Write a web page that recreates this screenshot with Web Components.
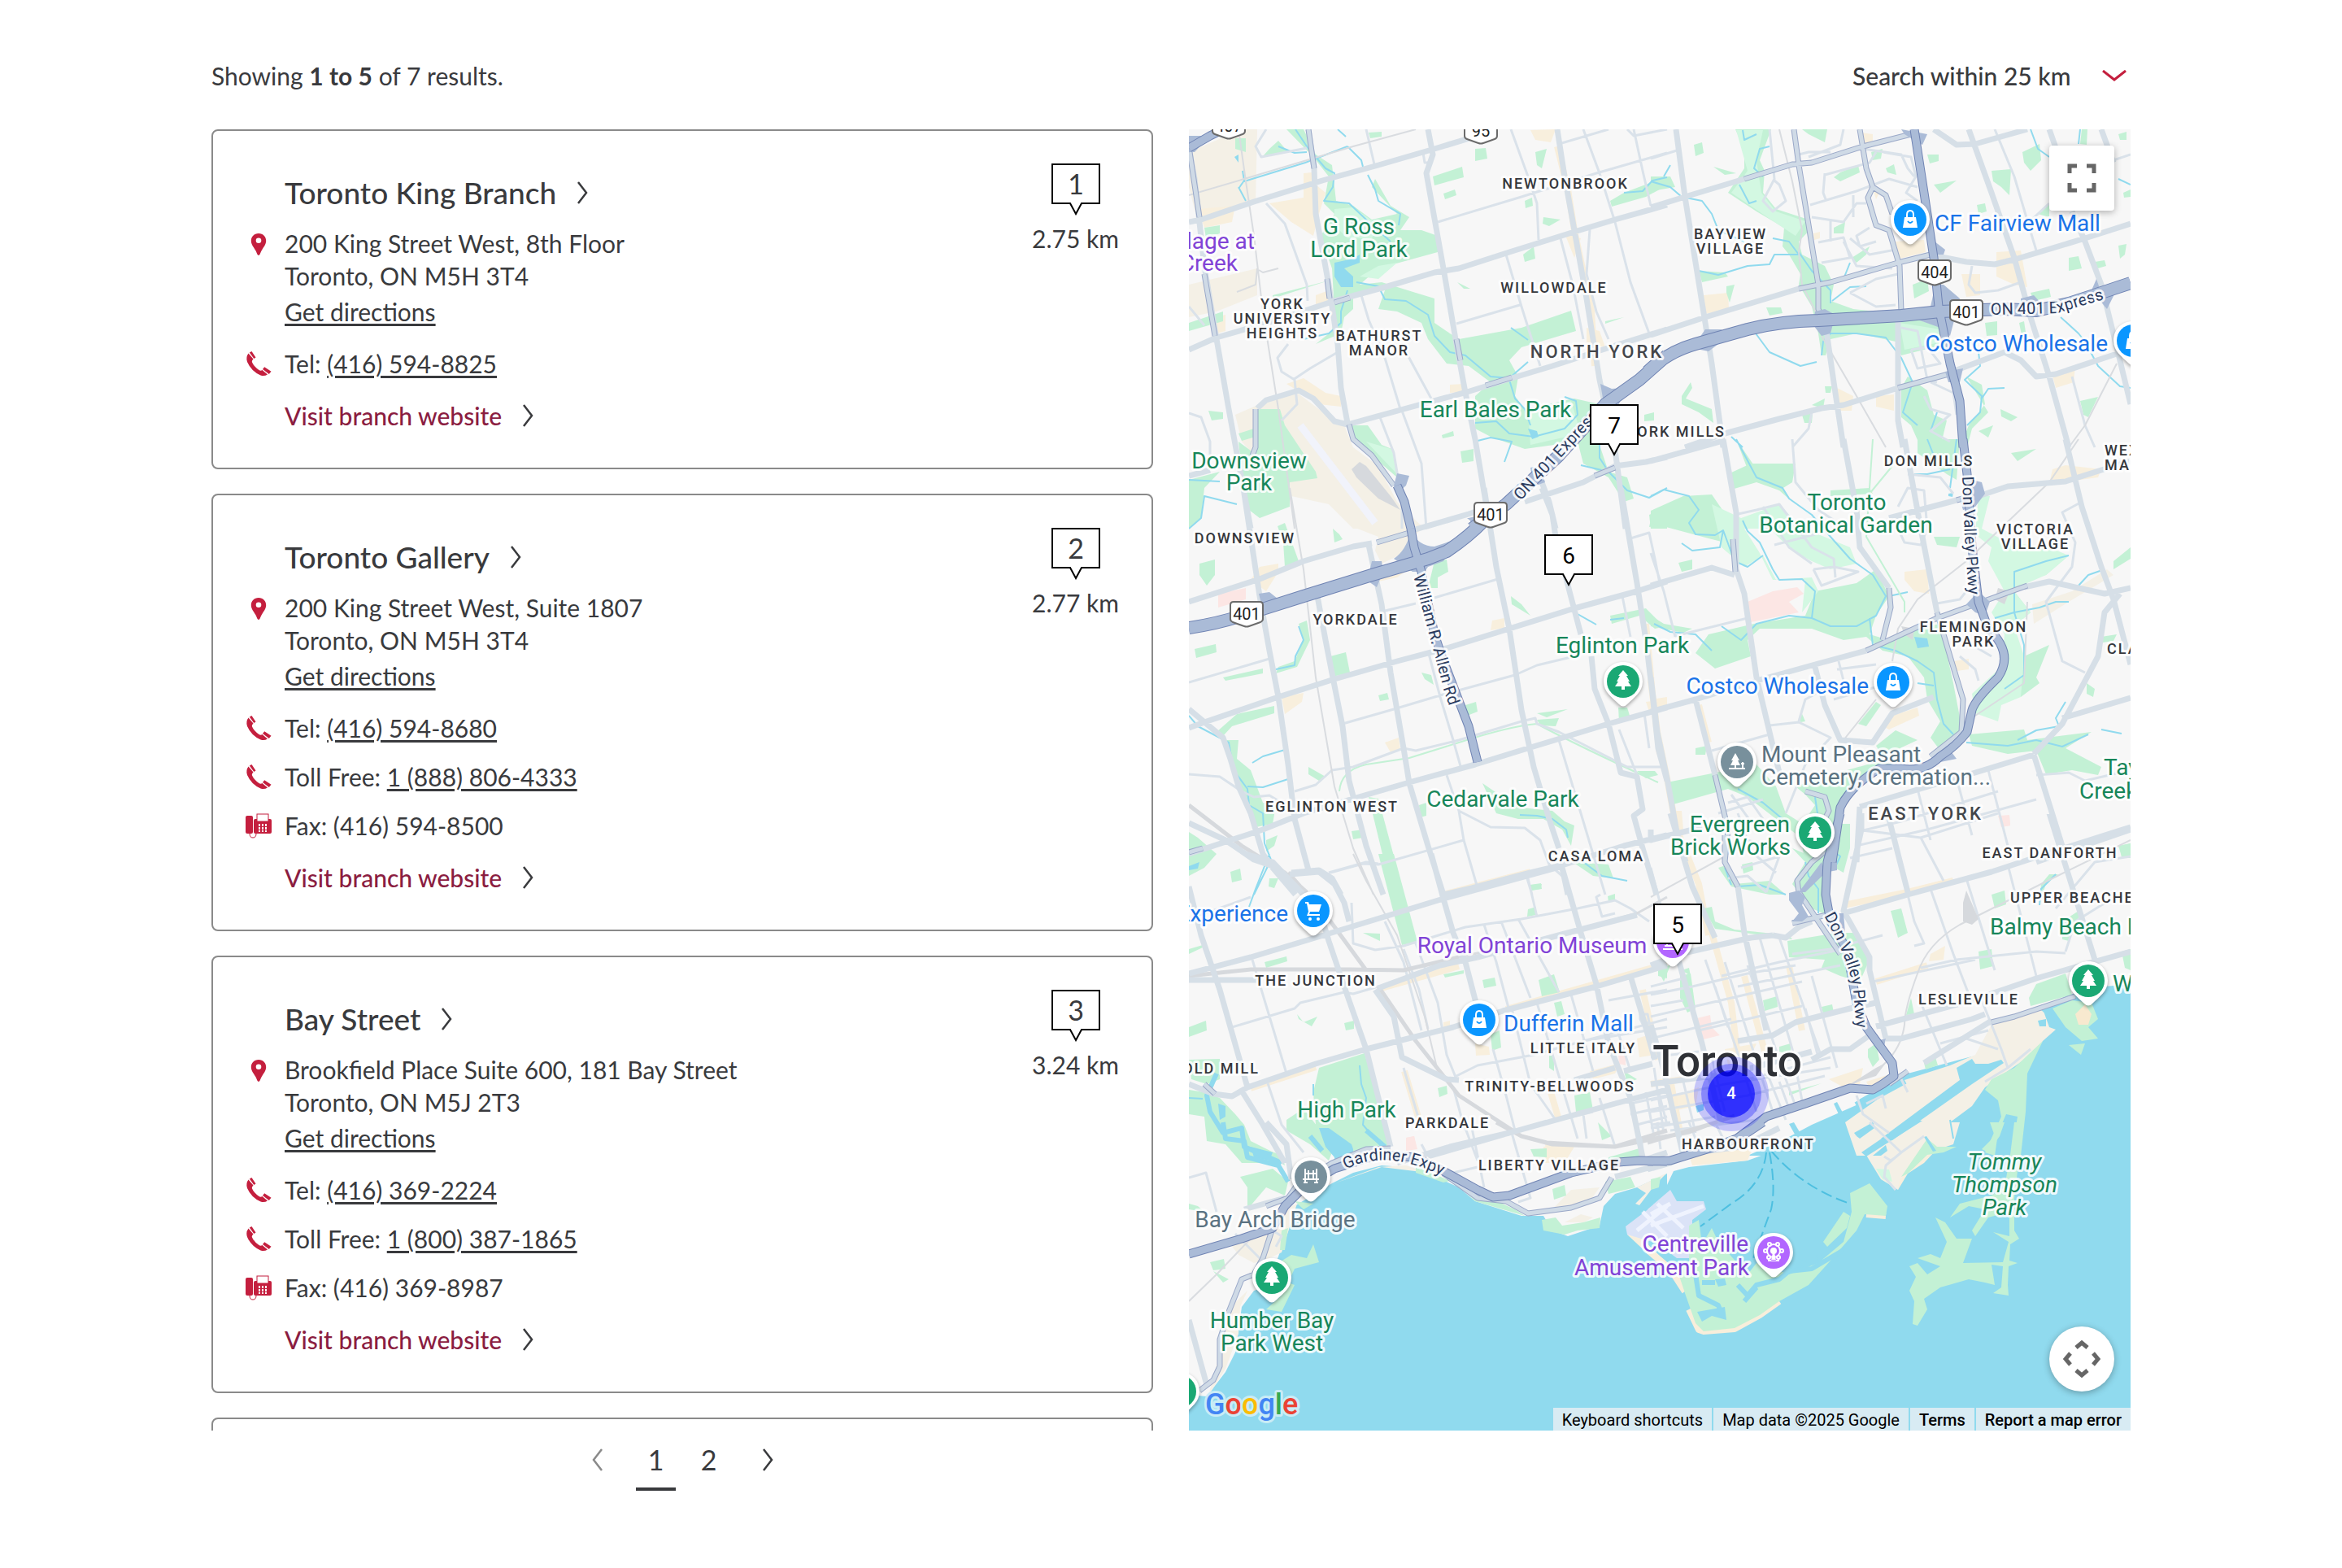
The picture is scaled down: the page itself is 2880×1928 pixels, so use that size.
<!DOCTYPE html>
<html lang="en">
<head>
<meta charset="utf-8">
<meta name="viewport" content="width=device-width, initial-scale=1">
<title>Branch locator</title>
<style>
  body { margin: 0; background: #fff; color: #393a3d; font: 400 30px/40px Lato, "Open Sans", sans-serif; }
</style>
</head>
<body>
<branch-locator>
  <p slot="summary">Showing <b>1 to 5</b> of 7 results.</p>
  <distance-select slot="filter"></distance-select>

  <branch-card slot="results" index="1" distance="2.75 km">
    <span slot="name">Toronto King Branch</span>
    <span slot="address">200 King Street West, 8th Floor<br>Toronto, ON M5H 3T4</span>
    <contact-line kind="phone" label="Tel:" number="(416) 594-8825"></contact-line>
  </branch-card>
  <branch-card slot="results" index="2" distance="2.77 km">
    <span slot="name">Toronto Gallery</span>
    <span slot="address">200 King Street West, Suite 1807<br>Toronto, ON M5H 3T4</span>
    <contact-line kind="phone" label="Tel:" number="(416) 594-8680"></contact-line>
    <contact-line kind="phone" label="Toll Free:" number="1 (888) 806-4333"></contact-line>
    <contact-line kind="fax" label="Fax:" number="(416) 594-8500"></contact-line>
  </branch-card>
  <branch-card slot="results" index="3" distance="3.24 km">
    <span slot="name">Bay Street</span>
    <span slot="address">Brookfield Place Suite 600, 181 Bay Street<br>Toronto, ON M5J 2T3</span>
    <contact-line kind="phone" label="Tel:" number="(416) 369-2224"></contact-line>
    <contact-line kind="phone" label="Toll Free:" number="1 (800) 387-1865"></contact-line>
    <contact-line kind="fax" label="Fax:" number="(416) 369-8987"></contact-line>
  </branch-card>
  <branch-card slot="results" loading></branch-card>

  <branch-map slot="map"></branch-map>
  <page-nav slot="pages"></page-nav>
</branch-locator>

<script>
/* ---------- shared helpers ---------- */
function component(tag, render) {
  customElements.define(tag, class extends HTMLElement {
    constructor() { super(); this.attachShadow({ mode: "open" }); }
    connectedCallback() { this.shadowRoot.innerHTML = render(this); }
  });
}
const chevron = {
  right: '<svg width="14" height="28" viewBox="0 0 14 28" fill="none" stroke="currentColor" stroke-width="2.5" aria-hidden="true"><path d="M1 1 L11 14 L1 27"/></svg>',
  left: '<svg width="14" height="28" viewBox="0 0 14 28" fill="none" stroke="currentColor" stroke-width="2.5" aria-hidden="true"><path d="M13 1 L3 14 L13 27"/></svg>',
  down: '<svg width="30" height="14" viewBox="0 0 30 14" fill="none" stroke="currentColor" stroke-width="3" aria-hidden="true"><path d="M1 1 L15 12 L29 1"/></svg>'
};
const icons = {
  place: '<svg width="32" height="32" viewBox="0 0 32 32" fill="#c41f3e" fill-rule="evenodd" aria-hidden="true"><path d="M16 3C10.500 3 6.800 7 6.800 12C6.800 16.500 10 20 12 23.500C13.500 26 14 28.500 15 29.500Q16 30.300 17 29.500C18 28.500 18.500 26 20 23.500C22 20 25.200 16.500 25.200 12C25.200 7 21.500 3 16 3ZM16 8.500A3.300 3.300 0 1 1 16 15.100A3.300 3.300 0 1 1 16 8.500Z"/></svg>',
  phone: '<svg width="32" height="32" viewBox="0 0 32 32" fill="#c41f3e" aria-hidden="true"><path d="M3.500 3.500Q0 8 2 14Q7 25.500 18.500 30.500Q23 32 27 29.500L20.500 24Q18.500 25.500 16.500 24Q10 19.500 7.800 14Q7.600 12 9.500 10.500Z"/><path d="M4.800 2.400L7.500 1L12.500 8.500L10.300 10Z"/><path d="M21 23L23.200 20.200L31.500 25.800L28.800 29Z"/></svg>',
  fax: '<svg width="32" height="32" viewBox="0 0 32 32" fill="#c41f3e" aria-hidden="true"><rect x="0" y="4" width="9" height="22" rx="2"/><rect x="10" y="8" width="22" height="18" rx="2"/><rect x="14" y="2" width="14" height="9" fill="#fff" stroke="#c41f3e"/><path d="M5 26Q5 31 9 31Q13 31 13 26" fill="none" stroke="#c41f3e"/><g fill="#fff"><path d="M16 14h2v3h-2zM20 14h2v3h-2zM24 14h2v3h-2zM16 18h2v3h-2zM20 18h2v3h-2zM24 18h2v3h-2zM16 22h2v2h-2zM20 22h2v2h-2zM24 22h2v2h-2z"/></g></svg>'
};

/* ---------- page frame ---------- */
component("branch-locator", () => `
  <style>
    :host { display: block; box-sizing: border-box; max-width: 2360px; margin: 0 auto; padding-top: 73px; }
    header { display: flex; justify-content: space-between; margin-bottom: 46px; }
    .columns { display: grid; grid-template-columns: 1fr 1fr; column-gap: 44px; height: calc(100vh - 328px); }
    .results { display: flex; flex-direction: column; gap: 30px; overflow: hidden; }
    .pages { display: grid; grid-template-columns: 1fr 1fr; column-gap: 44px; }
    ::slotted(p) { margin: 0; }
  </style>
  <header><slot name="summary"></slot><slot name="filter"></slot></header>
  <main class="columns">
    <div class="results"><slot name="results"></slot></div>
    <slot name="map"></slot>
  </main>
  <div class="pages"><slot name="pages"></slot></div>`);

component("distance-select", () => `
  <style>
    :host { display: block; }
    label { display: flex; position: relative; }
    select { appearance: none; border: 0; margin: 0; padding: 0 72px 0 0; background: none; color: inherit;
             font: inherit; font-weight: 500; height: 40px; }
    svg { position: absolute; right: 5px; top: 13px; color: #c41f3e; pointer-events: none; }
  </style>
  <label><select aria-label="Search radius"><option>Search within 25 km</option></select>${chevron.down}</label>`);

/* ---------- result cards ---------- */
component("contact-line", el => {
  const n = el.getAttribute("number"), kind = el.getAttribute("kind");
  const value = kind === "fax" ? n : `<a href="tel:${n.replace(/\D/g, "")}">${n}</a>`;
  return `
  <style>
    :host { display: flex; gap: 16px; align-items: center; }
    a { color: inherit; text-decoration-thickness: 3px; text-underline-offset: 3px; }
    svg { display: block; }
  </style>${icons[kind]}<span>${el.getAttribute("label")} ${value}</span>`;
});

component("number-flag", el => `
  <style>
    :host { display: block; width: 60px; height: 64px; }
    svg { display: block; }
    text { font: 400 34px Lato, sans-serif; }
  </style>
  <svg width="60" height="64" viewBox="0 0 60 64"><path d="M1 1H59V49H37L30 62L23 49H1Z" fill="#fff" stroke="#000" stroke-width="2"/><text x="30" y="38" text-anchor="middle" fill="#393a3d">${el.getAttribute("value")}</text></svg>`);

component("branch-card", el => el.hasAttribute("loading") ? `
  <style>:host { display: block; box-sizing: border-box; flex: none; height: 418px; border: 2px solid #8a8a8a; border-radius: 8px; }</style>` : `
  <style>
    :host { display: flex; justify-content: space-between; align-items: flex-start; flex: none; box-sizing: border-box;
            padding: 40px 40px 44px; border: 2px solid #8a8a8a; border-radius: 8px; }
    .body { display: flex; flex-direction: column; padding-top: 12px; }
    h2 { margin: 0 0 18px 48px; font-size: 37px; line-height: 48px; font-weight: 500; }
    h2 a, .visit { display: inline-flex; align-items: center; gap: 26px; color: inherit; text-decoration: none; }
    .place { display: flex; gap: 16px; align-items: flex-start; }
    .place > svg { margin-top: 5px; }
    .place div { display: flex; flex-direction: column; align-items: flex-start; gap: 4px; }
    .place a { color: inherit; text-decoration-thickness: 3px; text-underline-offset: 3px; }
    .lines { display: flex; flex-direction: column; gap: 20px; margin: 24px 0; }
    .visit { margin-left: 48px; font-weight: 500; align-self: flex-start; }
    .visit span { color: #8b1d41; }
    aside { display: flex; flex-direction: column; align-items: center; gap: 8px; }
  </style>
  <div class="body">
    <h2><a href="#branch"><slot name="name"></slot>${chevron.right}</a></h2>
    <div class="place">${icons.place}<div><slot name="address"></slot><a href="#directions">Get directions</a></div></div>
    <div class="lines"><slot></slot></div>
    <a class="visit" href="#website"><span>Visit branch website</span>${chevron.right}</a>
  </div>
  <aside><number-flag value="${el.getAttribute("index")}"></number-flag><span>${el.getAttribute("distance")}</span></aside>`);

component("page-nav", () => `
  <style>
    :host { display: block; padding-top: 14px; }
    nav { display: flex; justify-content: center; gap: 24px; }
    div { display: flex; gap: 16px; }
    a, button { box-sizing: border-box; width: 49px; height: 60px; padding: 0 0 12px; border: 0; border-bottom: 4px solid transparent;
                background: none; color: inherit; font: inherit; font-size: 34px; line-height: 44px; text-align: center; text-decoration: none; }
    button { display: flex; align-items: center; justify-content: center; }
    button:disabled { color: #8a8a8a; }
    a[aria-current] { border-color: #393a3d; }
  </style>
  <nav aria-label="Result pages">
    <button type="button" aria-label="Previous page" disabled>${chevron.left}</button>
    <div><a href="#page-1" aria-current="page">1</a><a href="#page-2">2</a></div>
    <button type="button" aria-label="Next page">${chevron.right}</button>
  </nav>`);

/* ---------- map data ----------
   Each sheet is digitised on its own grid: at = origin on the map plane, k = grid step. */
const W = 600 / 1568, E = 620 / 1568, V = 1 / 3;
const sheets = [
{ at: [1450, 150], k: W,
  tan: "M31 110L200 27L250 27L245 300L60 370L31 240Z M31 600L250 540L250 640L120 700L31 720Z M180 1080L260 1040L380 1000L450 1060L530 1120L560 1200L640 1270L700 1400L760 1470L790 1500L560 1500L480 1410L360 1380L200 1180Z",
  shop: "M60 320L180 310L170 370L80 390Z M290 300L400 280L400 190L425 185L440 230L470 260L450 340L430 420L360 370Z M345 965L400 945L470 1000L520 1010L520 1050L450 1040L380 990Z M440 640L480 620L490 665L440 680Z M870 970L915 965L915 995L870 1000Z M1130 30L1210 27L1195 75L1145 65Z M120 720L150 710L150 770L120 780Z M1240 410L1290 430L1270 500Z M1310 760L1350 770L1370 830L1310 820Z",
  strip: "M1215 90L1250 250L1270 400L1295 540L1325 700L1335 900",
  park: "M345 27L400 27L440 120L490 160L505 290L560 310L620 360L700 340L620 240L630 210L680 310L740 350L710 400L780 400L830 420L830 480L640 540L580 600L650 590L760 630L820 650L820 740L870 780L900 800L1100 760L1260 695L1275 770L1100 830L1060 880L1090 940L1080 1010L1110 1060L1270 1020L1350 1040L1350 1190L1380 1290L1440 1310L1460 1390L1430 1400L1380 1310L1300 1260L1280 1180L1110 1205L1000 1160L950 1130L950 1010L1000 960L930 900L860 890L800 800L780 740L700 700L640 690L660 620L560 640L560 690L530 720L520 780L440 820L490 770L500 700L490 540L455 420L500 340L465 300L480 200L430 130Z M815 200L910 165L915 205L820 235Z M850 265L885 250L890 270L855 285Z M950 100L985 95L990 135L950 145Z M1145 110L1180 100L1165 170L1150 160Z M1110 290L1135 280L1138 310L1112 318Z M1170 350L1225 360L1190 385L1168 375Z M1105 490L1140 460L1145 505L1110 515Z M1430 260L1568 200L1568 235L1500 275L1390 312L1385 290Z M895 590L935 615L915 615Z M250 1060L325 1060L340 1120L440 1290L445 1315L355 1330L355 1420L260 1460L225 1430L200 1290L190 1180L240 1220Z M540 1120L605 1120L650 1190L690 1210L700 1310L620 1230L570 1190Z M31 1320L130 1290L80 1350L70 1460L31 1500Z M95 1065L140 1070L140 1095L105 1100Z M190 1150L240 1130L245 1160L200 1175Z M845 1155L880 1140L882 1158L848 1168Z M905 1215L945 1205L945 1250L910 1258Z M1495 1080L1525 1070L1525 1100L1495 1105Z M1510 1450L1568 1420L1568 1500L1515 1500Z M80 390L130 380L130 410L85 430Z M31 740L140 700L140 735L31 770Z M180 60L215 60L215 110L180 100Z M290 100L320 70L350 110L270 125Z M610 40L650 35L650 55L615 60Z M1370 735L1430 720L1370 745Z M300 640L480 585L300 650Z",
  light: "M500 320L560 315L640 380L620 430L540 430L500 380Z M580 570L640 530L700 520L640 580Z M1120 1070L1260 1030L1290 1150L1130 1190Z M600 1180L690 1210L700 1300Z",
  water: "M500 520L560 505L580 490L580 520L530 540L560 570L560 610L520 610L500 570Z M178 130L190 120L190 150Z M1120 1130L1150 1140L1155 1160L1135 1170Z",
  stream: "M375 27L410 90L440 130L470 170L500 190L495 240L465 290L545 300L600 360L680 440 M605 195L630 250L640 290L710 340L705 380 M540 90L585 140L590 165 M510 27L535 55 M320 90L370 115L410 110 M570 590L640 605L660 655L730 660L800 710L820 790L870 850L920 860L1000 940L1060 945L1120 885 M540 620L520 700L520 740L480 780L400 800 M1060 950L1080 1020L1110 1060L1130 1120 M950 1110L1020 1105L1060 1150L1140 1160L1240 1130L1280 1080L1275 1030L1240 1015 M960 1175L1000 1165L1070 1180L1045 1255 M1350 1190L1350 1240L1380 1290L1290 1265 M1380 1290L1440 1360L1510 1385L1568 1350 M1430 260L1490 255L1520 215L1568 205 M210 220L405 150L540 90 M190 245L210 215L205 180 M190 240L215 290 M31 1320L130 1325 M31 1500L70 1460L80 1380L185 1410 M1065 760L1120 805",
  minor: "M600 27L628 155 M1065 27L1120 200L1150 300L1155 435 M1300 27L1350 190L1400 370L1450 590L1510 780 M1460 27L1490 180L1515 310 M1050 490L1100 680L1160 900 M1225 430L1265 600L1300 800 M1320 395L1310 560L1340 700L1380 800 M830 370L1100 275L1340 190L1568 115 M1220 80L1380 27 M890 745L1095 675 M585 640L610 730L660 870L710 1060 M730 850L810 1020 M645 1090L690 1220L715 1400L715 1500 M715 1065L780 1260L795 1500 M280 300L340 375L410 600L412 660 M365 950L420 910L510 850 M350 820L315 870L330 920L370 950L380 1040L330 1100 M31 1075L70 1090L100 1180L100 1270 M785 115L790 150L805 150 M280 27L245 90L265 130L410 95 M1440 27L1460 50L1568 27 M31 680L80 750",
  rail: "M190 27L215 220L240 420L270 700L320 1060L370 1500 M31 270L210 210L560 90L760 27 M255 545L270 555L320 540 M250 540L245 600L185 628",
  major: "M31 370L70 360L240 295L460 215L640 160L820 100L960 50L1010 27 M31 840L120 795L300 735L500 660L660 610L820 555L900 540L1060 480L1270 405L1400 360L1568 305 M250 1055L280 1025L385 990L430 1020L500 1105L540 1115L720 1060L925 995L1070 945L1200 900L1400 825L1568 765 M31 1305L100 1285 M790 1495L930 1445L1000 1420 M1110 1400L1300 1330L1400 1270L1500 1255L1568 1235 M31 95L50 210L80 530L120 800L160 1060L200 1320L230 1500 M415 27L435 170L440 340L480 600L510 820L520 980L540 1110 M800 27L815 120L795 190L850 540L890 820L920 1000L950 1170L985 1400 M1215 27L1240 200L1270 400L1310 650L1350 950L1400 1210L1435 1500 M1165 1330L1190 1400L1210 1500",
  cased: "M245 1060L245 1200L235 1230 M500 665L550 648 M985 973L1070 943 M80 560L115 790 M475 580L483 650 M890 800L905 880 M1335 1305L1400 1275 M415 27L435 170 M35 110L65 350 M545 1115L560 1170L620 1230L690 1340",
  runway: "M390 1120L630 1480",
  apron: "M555 1280L580 1255L600 1270L680 1380L710 1430L640 1390L570 1310Z",
  ramp: "M1355 965L1390 985L1430 980L1415 1040L1365 1035Z M690 1340L700 1295L740 1305L730 1340L700 1370Z M1130 1275L1160 1270L1175 1330L1140 1345Z M930 1460L950 1455L950 1500Z M31 50L100 50L50 110L31 110Z",
  hwy: "M1568 860L1480 950L1370 1040L1220 1230L1050 1410L940 1500",
  hwy2: "M31 95L100 50L140 27 M700 1340L725 1400L745 1500" },
{ at: [2030, 50], k: E,
  park: "M262 327L375 327L340 440L355 480L350 560L390 620L490 660L500 690L460 740L470 790L540 830L570 900L560 960L630 990L700 1000L770 1020L830 1030L910 1060L920 1120L780 1160L760 1110L680 1090L640 1080L560 1100L545 1160L530 1160L520 1080L500 980L460 900L465 860L430 790L410 760L415 690L330 630L240 560L290 470L290 400Z M150 850L230 855L240 870L160 890Z M780 1280L800 1240L860 1290L880 1380L920 1400L900 1500L840 1500L810 1420L780 1390Z M980 1240L1030 1270L1040 1340L990 1420L960 1500L985 1500L1000 1430L1050 1370Z M133 385L160 375L165 415L140 425Z M570 505L590 485L645 460L650 485L590 520Z M685 410L720 400L715 435L690 440Z M730 470L755 455L765 495L735 485Z M470 327L550 327L540 375L490 345Z M360 985L405 985L410 1005L370 1015Z M235 905L260 900L245 965L235 930Z M860 420L895 420L895 445L868 452Z M1060 480L1120 475L1115 570L1090 540L1065 520Z M1155 410L1210 380L1215 440L1180 480L1160 450Z M880 530L950 515L900 560Z M1015 605L1040 600L1045 630L1020 638Z M1300 800L1330 795L1340 840L1300 850Z M1455 755L1480 750L1475 790L1458 805Z M1380 815L1410 810L1415 832L1382 842Z M1340 327L1358 327L1355 385L1335 380Z M1455 345L1480 335L1480 365L1460 365Z M1205 640L1240 600L1240 650Z M1040 1040L1078 1035L1078 1085L1045 1090Z M1145 1040L1160 1035L1168 1095L1155 1100Z M1335 1330L1390 1315L1360 1390L1345 1380Z M1088 1360L1140 1390L1120 1405L1090 1385Z M1020 1440L1065 1420L1050 1465Z M95 1310L125 1260L130 1280L110 1320L190 1360L195 1410L150 1370L95 1340Z M540 1275L565 1275L560 1300L545 1300Z M500 1345L540 1320L535 1355Z M470 1380L503 1375L500 1410L478 1410Z M570 690L605 670L600 710L570 710Z M625 800L680 760L670 790L640 820Z M815 900L860 880L865 925L820 950Z M195 465L265 490L230 495Z M0 500L60 500L75 540L0 555Z M1180 930L1240 915L1245 945L1190 960Z M1470 560L1492 550L1492 575L1472 580Z",
  light: "M265 330L350 330L330 440L345 560L390 630L480 665L450 720L400 680L250 560L300 480Z M775 1040L900 1065L910 1110L790 1140Z",
  shop: "M165 940L240 930L243 990L170 1008Z M760 740L850 735L855 780L775 805Z M965 860L1025 860L1025 940L980 945Z M1075 780L1150 775L1170 910L1130 900L1075 870Z M580 1280L630 1310L625 1365L590 1365Z M700 1310L755 1305L755 1365L700 1350Z M1250 1235L1320 1200L1315 1260L1260 1280Z M655 340L690 345L690 370L662 380Z M690 545L712 555L700 585Z M505 710L525 705L525 730L508 735Z",
  pink: "M530 930L560 945L570 995L535 1000Z",
  stream: "M0 520L60 540L95 575L160 590L190 640L210 700L290 740 M150 850L210 865L300 830L370 825L385 790L460 790L430 740L380 730 M275 530L305 600L330 590 M325 1080L370 1150L465 1200L515 1185 M530 1160L535 1110L560 1080L640 1080L730 1095L780 1170L815 1260L785 1370L830 1420 M980 1090L1020 1150L1025 1200L975 1250L1030 1310L1025 1370L985 1420 M1100 1280L1050 1285L1030 1320 M1275 1020L1330 1080L1350 1110L1390 1200L1460 1275L1492 1280 M1180 327L1205 400L1240 430 M1335 327L1330 380 M565 960L620 910L670 905 M1455 510L1492 530 M250 1460L285 1500 M285 330L290 365L330 345 M370 390L340 400L320 470L350 500 M460 780L500 850L560 920L560 970 M620 820L600 880 M60 460L40 500 M890 1370L870 1440",
  minor: "M0 435L80 405 M370 327L385 510L350 590L380 630L420 590L400 530L385 515 M495 605L640 555L740 510L830 540 M490 430L590 385L600 327 M540 490L535 560L545 585 M540 495L680 450L700 410 M820 500L800 470L780 420L660 400 M500 650L600 670L640 600L670 600 M520 745L600 725L620 800L530 820 M560 660L560 740 M600 740L640 830L750 840 M620 730L680 790L760 770 M620 930L700 980L760 975 M620 930L700 880L770 860 M1000 830L990 900L1010 930L1080 920L1150 890 M1070 327L1130 500L1200 775 M1165 680L1240 600 M1440 440L1492 420 M810 1140L860 1130L900 1190L830 1210L810 1140 M780 1060L830 1070L860 1250L890 1260 M850 1310L870 1360L930 1380L870 1440L930 1480 M870 1260L940 1300L950 1380 M1310 1240L1350 1420L1380 1500 M500 1370L490 1430L440 1500 M460 420L490 410L560 410 M720 410L810 430L825 500L795 560L830 590 M630 570L630 650 M680 690L640 720L650 760L700 740",
  rail: "M400 327L440 520L470 700L460 780L470 900L520 1020 M530 1090L640 1310L730 1500 M1450 1190L1350 1420L1300 1500",
  major: "M78 327L105 575L170 1040L190 1190L225 1500 M0 615L105 575L290 510 M0 1085L170 1020L460 915 M880 327L950 385L1010 380L1170 327 M990 327L1060 560L1130 800L1180 1020L1240 1240L1300 1500 M1240 327L1270 430 M1400 327L1440 450 M890 795L980 815L1070 825L1140 805L1350 730L1492 675 M1310 630L1350 740L1400 900L1450 1130L1492 1340 M105 1500L230 1450L400 1395L530 1355L600 1345L770 1280 M545 1050L570 1260L600 1500 M930 1225L1100 1150L1150 1180L1200 1240L1260 1230L1450 1155 M770 1030L770 1400L785 1500",
  cased: "M290 510L440 455L500 450L660 390L810 345 M445 327L460 460L520 900L520 990L545 1050 M650 327L670 470L690 540L730 570L750 640 M690 540L675 580L700 680L740 700L775 830L780 1000 M460 915L560 890L770 820L870 790 M770 1280L925 1230",
  ramp: "M780 327L860 345L845 385L830 375L790 345Z M870 730L915 770L910 790L880 790Z M870 980L885 900L910 900L960 950L950 1000L930 1090L900 1060L830 1030L780 1020L780 1000Z M170 1065L220 1065L230 1100L180 1145L130 1135Z M510 1000L540 990L575 1010L560 1080L530 1090L505 1050Z M1150 950L1190 940L1215 970L1190 1020L1150 1010Z M915 1220L970 1210L960 1260L925 1260Z M1370 920L1385 880L1400 930L1445 930L1420 990Z",
  hwy: "M-10 1222Q50 1150 140 1120L300 1065Q400 1035 520 1033L780 1015L900 1000L1100 990L1200 995L1300 970L1400 930L1492 895",
  hwy2: "M820 327L850 560L880 800L895 980L930 1190L960 1330L970 1500" },
{ at: [1450, 600], k: W,
  tan: "M560 145L790 145L760 170L740 230L650 280L630 230L640 180Z",
  shop: "M260 290L320 280L320 310L280 380L230 340Z M330 770L400 755L395 790L340 835Z M1005 490L1045 480L1045 515L1000 525Z M660 940L705 920L710 965L680 975Z M1500 790L1568 780L1568 820L1510 825Z M640 330L730 305L700 330L640 345Z",
  strip: "M1500 500L1520 760L1545 980 M850 1500L1130 1415",
  pink: "M125 390L215 370L215 410L125 440Z",
  park: "M315 140L340 130L385 270L340 290L335 200Z M65 280L115 265L115 320L90 360L65 320Z M495 150L515 170L525 190L500 200Z M820 270L860 265L865 310L830 330L830 370L800 370Z M50 595L118 577L120 605L55 628Z M385 500L410 490L420 560L380 660L310 685L320 660L370 640L400 560Z M140 700L270 665L270 685L150 710Z M485 620L535 605L550 680L495 695Z M185 835L305 805L305 830L170 880L140 915L120 900Z M640 765L668 755L675 780L645 785Z M780 680L810 690L818 725L790 705Z M920 800L955 790L960 825L925 840Z M1150 830L1250 815L1180 845Z M1150 855L1220 850L1210 880L1160 875Z M1065 400L1100 430L1130 470L1070 430Z M1385 470L1500 445L1540 490L1568 510L1530 520L1480 470L1390 500Z M1520 90L1568 70L1568 135L1510 145Z M1410 810L1440 810L1450 850L1415 860Z M415 1030L470 1065L450 1080L415 1055Z M610 1140L640 1145L720 1490L685 1500Z M770 1170L795 1160L795 1210L775 1215Z M975 1090L1050 1150L1100 1180L1200 1190L1240 1230L1270 1245L1260 1320L1230 1260L1170 1220L1090 1220L1020 1200Z M1470 1045L1530 1045L1540 1060L1500 1070Z M555 1265L590 1260L590 1290L560 1295Z M150 930L190 930L185 1000L230 1040L270 1160L310 1170L300 1240L245 1250L210 1130L180 1060Z M31 1270L60 1290L120 1350L80 1400L31 1430Z M280 1300L315 1280L305 1320L280 1340Z M165 1415L195 1405L200 1445L170 1455Z M290 1440L320 1440L305 1475L288 1470Z M1265 1380L1380 1390L1395 1440L1330 1430Z M1130 1465L1165 1460L1160 1480L1130 1485Z",
  water: "M31 1395L65 1380L60 1405L31 1410Z",
  stream: "M31 840L60 880L160 940L175 1040L220 1110L225 1170L270 1200L275 1310L295 1370L240 1500 M235 1015L270 990L340 965 M220 1100L270 1105L350 1075 M385 510L400 560L375 620L370 655L310 668 M1095 1205L1150 1210L1200 1220L1245 1260L1250 1290 M1300 1380L1360 1430L1440 1450 M1280 465L1340 505 M1385 485L1430 480",
  trail: "M515 1120Q520 1040 600 1020L740 995L900 940Q1060 880 1150 870Q1280 950 1540 1085",
  minor: "M445 400L620 340 M650 455L760 425 M820 405L1025 335 M31 718L290 630 M525 870L690 815L840 765L1080 690L1150 655L1270 620 M370 1120L440 1095L490 1040L560 1030L720 960L760 970L900 930L1100 860L1145 850L1150 870L1220 900L1440 1030L1568 1030 M800 600L840 770L880 930L905 1025 M860 1060L900 1190L915 1300L960 1475 M31 1055L130 1065L200 1120L240 1140L290 1135L330 1160 M485 1420L590 1385L640 1390L915 1300 M900 1190L1000 1250L1110 1255L1160 1300L1190 1390L1230 1430 M1220 930L1290 1200L1370 1500 M1425 400L1450 550 M1450 185L1510 165L1530 260L1545 350 M1495 830L1510 960 M1115 1430L1135 1500 M1415 890L1470 1060",
  rail: "M355 0L400 300L440 700L500 1100L560 1330L625 1500",
  yard: "M31 1170L200 1320L340 1420L410 1490",
  major: "M31 420L260 335L400 270L560 215L620 205 M750 155L930 95 M31 885L90 860L320 770L500 705L700 640L860 590L1060 520L1270 445L1470 380L1568 345 M31 1350L270 1260L400 1200L560 1145L740 1085L950 1020L1120 960L1380 870L1568 810 M210 20L260 400L290 600L320 770L350 1020L370 1220L415 1410 M445 400L470 560L495 700L525 880L545 1080L600 1320L655 1500 M610 210L650 430L680 680L720 960L740 1090L800 1320L850 1500 M980 0L1020 290L1060 520L1100 820L1140 1030L1190 1220L1220 1330 M1165 0L1200 100L1210 180L1255 380L1290 540 M1420 0L1470 350L1500 560L1520 760L1540 960L1568 1080 M850 1500L940 1475L1130 1420L1240 1390L1430 1320L1568 1280 M31 815L140 920L165 1000L190 1100L230 1200L270 1350L300 1400L375 1500 M31 1235L150 1300L240 1370L300 1395 M360 1420L450 1410L490 1440L520 1500 M1325 620L1335 740L1380 870L1420 1050L1470 1065L1490 1185L1460 1210L1490 1330L1535 1500 M1230 1400L1250 1500",
  cased: "M635 200L740 165 M31 1345L75 1328",
  ramp: "M745 160Q770 215 820 215L890 190L850 270L800 290L790 310L750 310L720 285L690 260Q730 230 745 160Z M620 270L650 270L655 310L635 365L600 340L610 320Z M255 390L290 385L330 420L270 450Z M925 110L950 110L960 140Z",
  hwy: "M31 515Q120 500 200 470L400 400L620 320L800 260L860 235Q930 180 980 120",
  hwy2: "M745 150L755 220L780 310L820 540L845 620L905 800L930 880L960 1010" },
{ at: [2030, 540], k: E,
  tan: "M1185 610L1310 560L1420 480L1440 500L1300 600L1190 680Z",
  shop: "M790 490L860 480L865 570L820 560L790 520Z M1250 110L1290 95L1400 110L1390 140L1240 165Z M750 1020L830 990L835 1020L740 1070L720 1060Z M940 820L990 810L990 850L950 855Z M0 960L50 950L50 1000L0 1010Z M75 1370L95 1370L100 1440L75 1440Z",
  strip: "M0 890L20 1080L50 1250L80 1450 M150 980L180 1120",
  pink: "M300 600L380 560L455 545L475 570L430 600L460 640L310 675Z M1085 1390L1115 1385L1118 1425L1090 1430Z",
  light: "M190 240L280 290L400 240L440 290L520 350L620 400L640 460L560 480L500 450L440 410L370 330L290 330L340 420L380 520L500 510L520 560L470 640L480 520L390 520L350 430L290 470L220 400Z M1020 200L1055 210L1030 330L1110 380L1240 400L1300 430L1230 500L1170 530L1130 560L1180 640L1130 690L1160 800L1150 950L1090 980L1080 1040L1010 1010L1000 940L1090 840L1100 720L1060 640L1100 560L1050 450L1060 400L1010 350Z",
  park: "M0 265L100 210L190 205L240 290L230 380L180 365L0 310Z M510 560L640 530L700 480L740 580L700 650L680 720L740 740L830 700L900 680L940 900L970 1090L900 1150L870 1100L900 1040L860 960L850 880L800 800L720 780L670 730L600 740L500 700L340 700L300 740L310 800L200 845L140 790L180 720L320 680L480 650Z M245 125L310 90L450 90L440 160L400 190L330 160L250 185Z M265 0L330 110L400 160L440 230L400 190L300 110Z M1130 420L1240 410L1300 430L1230 500L1150 520Z M1130 560L1180 640L1130 690Z M1160 800L1240 760L1200 880L1210 900L1150 950L1120 900Z M990 1090L1160 1070L1170 1110L1370 1080L1290 1140L1400 1210L1390 1240L1310 1220L1230 1235L1200 1150L1110 1160L1000 1130Z M50 1265L330 1200L390 1280L420 1380L500 1440L500 1500L410 1420L300 1320L240 1290L60 1350Z M450 1280L520 1250L700 1190L760 1200L650 1260L580 1370L560 1560L480 1560L460 1440L510 1350L480 1310Z M85 455L130 445L130 480L95 490Z M1120 50L1200 35L1140 80Z M880 360L960 360L950 400L890 390Z M1355 900L1380 920L1375 950L1355 940Z M645 1050L700 970L715 980L670 1060Z M1440 450L1492 400L1492 440L1440 480Z M830 0L960 0L950 150L920 130L830 50Z M0 650L40 680L130 700L100 715L0 690Z M1460 1500L1492 1490L1492 1545L1465 1545Z M700 1130L760 1075L830 1110L720 1170Z M465 1000L480 1040L465 1045Z M140 1140L175 1130L170 1165L140 1165Z M1400 730L1450 720L1440 745L1405 750Z M560 190L680 180L690 200L560 210Z",
  water: "M820 730L860 735L865 765L830 770Z M925 200L940 198L938 212L926 210Z",
  stream: "M0 210L40 185L120 210L150 260L120 310L140 350L200 355L225 335L215 400L130 410L95 385 M225 335L260 450L300 470L350 430 M285 300L300 340L340 380L380 480L400 520L470 515L510 560L500 660L430 650L330 680L280 740L220 690 M500 660L560 690L640 690L700 650L730 580L690 500L620 440L560 360L500 280L430 220L410 180L330 140L265 0 M680 660L690 760L760 780L830 820L880 860L890 960L910 1050L940 1090 M950 0L940 90L930 180 M930 110L860 130L820 130 M1300 430L1230 450L1130 490L1130 640L1160 760L1160 870L1100 920 M1070 660L1130 640L1210 620L1260 600L1300 600 M980 1120L1110 1130L1200 1110L1280 1135L1360 1090 M1290 970L1260 1030L1270 1060L1200 1075L1140 1110 M1330 540L1360 500L1410 480 M270 1290L350 1340L410 1400 M740 580L800 565 M1400 1072L1465 1085 M510 1320L520 1400L480 1500 M10 680L60 710L140 720L190 780 M860 0L880 60L930 100 M830 900L880 910",
  trail: "M690 0L670 360L790 600L790 640 M750 100L680 200",
  minor: "M0 420L40 560L75 730 M75 725L300 660 M440 0L450 160L520 260L610 330 M260 280L330 260L400 240L500 400L570 440L575 510 M350 250L430 400L500 460 M385 390L510 350 M505 480L570 470L645 490L530 540L505 480 M770 250L800 180L850 190L860 330L840 390L790 380L760 310 M1340 230L1280 270L1320 380L1310 470L1230 600L1280 820L1350 860 M570 960L740 900 M370 1055L460 1045L560 1100L480 1200L420 1380 M190 1150L370 1090 M460 1040L480 960L540 920 M585 820L600 890 M830 1290L870 1480 M950 1250L1000 1460 M1050 1220L1110 1500 M1200 1240L1300 1230L1350 1260L1492 1220 M650 1445L780 1410L860 1380L1080 1300 M240 1340L300 1320L350 1400 M640 1500L860 1440L1200 1330 M950 740L1000 760L1060 800 M960 800L1010 850L1020 890 M580 850L700 830 M890 605L960 590L980 560 M250 1310L330 1440 M210 1380L350 1330 M800 130L900 140L940 200",
  rail: "M1240 160L980 450L830 590L770 700L750 820 M700 960L600 1110 M1330 0L1240 160 M1170 600L1160 900L970 1050",
  apron: "M780 690L820 700L815 740L790 720Z M1080 550L1115 560L1100 610L1070 590Z",
  major: "M0 80L225 5 M225 0L265 270L265 480L290 570L330 880L370 1080L400 1230 M0 540L190 475L260 500 M600 0L640 260L650 400L740 550 M790 0L840 330L890 640 M740 290L950 225 M1020 210L1110 175L1290 155L1400 115L1492 80 M1290 0L1340 250L1400 470L1440 590L1492 830 M1160 545L1240 525L1330 550L1410 570L1492 550 M1460 570L1410 640L1390 800L1280 1050L1190 1160 M0 1005L140 960L330 890L510 830L670 780 M510 840L540 980L590 1110L690 1120L750 1010L880 950 M1280 1030L1492 955 M0 1475L80 1455L160 1430 M1010 1230L1190 1165 M1190 1165L1220 1270L1290 1540 M650 1355L750 1320L1010 1230 M650 1355L640 1560 M140 960L200 1240 M0 880L20 1080L50 1250L80 1450L110 1560 M1200 1560L1492 1440",
  cased: "M740 550L745 620L720 740 M670 780L890 660L1010 610L1170 540 M890 640L930 800L970 960L965 1080L870 1170 M200 1240L240 1440L230 1560 M480 1300L540 1320L555 1370L540 1400 M950 225L1020 205 M255 370L262 490",
  ramp: "M1000 150L1030 160L1040 200L1010 250L970 260L960 220L990 190Z M980 610L1020 560L1055 600L1040 650L1010 640Z M880 1170L920 1130L950 1180L900 1190Z",
  hwy2: "M970 0L985 130L1000 400L1020 600L1050 700Q1130 790 1080 880Q1010 960 1000 1000L985 1080Q950 1130 900 1170Q850 1230 780 1215L710 1215Q620 1280 590 1360L565 1560" },
{ at: [1450, 1050], k: W,
  shop: "M950 700L995 710L998 740L955 745Z M1470 680L1530 660L1530 740L1480 750Z M1170 1080L1250 1075L1220 1140L1175 1140Z M850 620L870 615L870 645L850 655Z M1320 800L1420 770L1400 810L1330 830Z",
  strip: "M1050 572L1568 405 M1490 500L1540 760 M725 800L770 980 M1195 880L1220 980 M650 495L900 415 M230 865L440 785",
  pink: "M728 1048L755 1040L762 1085L730 1095Z M1412 740L1435 745L1435 780L1415 775Z",
  park: "M640 0L690 0L765 325L715 335Z M590 290L645 295L645 320Z M275 400L345 378L348 395L280 420Z M31 350L75 335L75 345L31 370Z M850 445L915 428L915 440L855 455Z M975 465L1015 455L1018 485L980 495Z M1155 465L1205 445L1222 510L1165 525Z M1205 548L1228 543L1240 590L1215 600Z M1000 665L1030 650L1035 715L1005 725Z M530 625L562 615L562 645L535 650Z M380 590L400 620L445 600L425 635L385 610Z M31 640L85 615L88 650L31 675Z M450 790L595 735L680 1080L500 1115L440 1000L430 880Z M31 760L130 755L130 830L90 850L40 830Z M31 870L80 880L130 900L180 960L210 1000L230 1060L320 1110L350 1140L200 1140L150 1070L90 1060L80 970L31 960Z M345 980L400 940L460 1030L490 1100L480 1130L420 1070L345 1020Z M830 865L860 855L862 885L835 898Z M1270 890L1320 880L1330 945L1275 950Z M1345 990L1390 1040L1360 1055Z M1190 745L1205 745L1205 800L1190 790Z M1540 415L1568 405L1568 460L1540 450Z M1430 800L1470 830L1440 845Z M1120 205L1148 195L1148 225L1118 232Z M1130 115L1162 108L1165 128L1132 135Z M1378 155L1400 148L1402 170L1380 178Z M1380 1120L1480 1085L1490 1140L1380 1140Z",
  water: "M450 1010L480 1010L555 1070L560 1090L560 1140L500 1140L500 1120L470 1080Z M125 920L150 930L150 970L130 980Z M230 1080L300 1100L290 1130L240 1120Z",
  river: "M120 810L90 890L100 950L140 1030L200 1010L210 1080L330 1140 M420 1040L460 1095 M600 1020L660 1080",
  stream: "M580 780L585 850L600 900L590 1000L650 1080 M290 0L245 130L225 195 M31 900L75 903 M430 850L430 890",
  minor: "M480 70L600 30L640 35 M555 180L560 330L630 355L720 340L920 270L1100 240L1280 200L1400 170L1450 200L1510 250 M235 390L300 640L345 810 M170 640L370 570L390 550L530 510L560 515L640 490 M285 845L330 1000L400 1100 M660 250L720 400L780 650 M720 350L770 500L800 645 M760 330L830 550L860 740L890 830 M980 260L1020 400L1060 580 M1035 250L1130 530 M1090 240L1220 510 M1010 720L1050 890L1080 1020 M1070 570L1130 850L1210 980 M880 860L910 980L960 1130 M1150 550L1220 820L1280 1050 M1260 520L1330 800 M890 820L960 780L1140 740L1300 690L1568 610 M1380 540L1568 500 M1120 90L1150 230 M1355 150L1340 160L1360 230L1400 220 M31 240L230 160 M1350 900L1400 1080 M1300 690L1568 640 M1400 620L1450 800 M720 790L770 980 M1210 985L1330 950 M1300 960L1310 1050 M1450 920L1568 890 M1450 960L1568 930 M1470 1000L1568 970 M1500 880L1530 1060 M1540 870L1568 1000 M1483 590L1505 590L1510 620L1490 628L1483 608Z",
  rail: "M560 0L600 100L700 300L790 600L830 800",
  yard: "M350 70L480 240L600 430 M31 450L230 425L550 425L720 430L900 380 M640 490L760 690L900 890L1100 1040L1180 1065L1400 1080L1568 1040",
  rail2: "M900 380L1180 310L1470 220L1568 160",
  major: "M31 440L230 380L480 295L660 230L850 165L1040 105L1230 45 M31 120L70 300L130 500L220 860 M31 848L110 885L170 895L220 860L440 775L600 720L880 640L1040 580L1340 490L1568 410 M355 75L450 65L500 110L530 180L545 250 M460 240L480 320L530 490L600 720L680 1080 M215 0L300 30L345 85L400 150 M630 500L690 600L715 750L860 830L900 835 M640 495L840 410L960 380 M810 0L850 165L880 290L920 400L955 550 M31 465L250 465 M1230 50L1290 290L1340 480L1380 700L1450 900L1490 1120 M1450 450L1490 600L1530 760 M700 1140L870 1080L1060 1030L1400 920L1568 870 M205 880L270 1000L340 1140 M1430 800L1520 775 M1270 835L1400 790 M960 380L1240 295L1470 225",
  cased: "M80 850L115 885" },
{ at: [2030, 1000], k: E,
  lake: "M1492 630L1410 640L1300 670L1215 720L1060 880L990 900L800 960L740 990L650 1070L500 1150L420 1200L300 1262L1492 1262Z",
  tan: "M790 985L930 930L1010 890L1060 780L1200 710L1230 740L1262 795L1220 840L1200 880L1110 950L1040 1010L1000 1080L930 1140L860 1210L850 1262L640 1262L605 1140L700 1060Z",
  shop: "M870 520L915 490L910 540L865 545Z M555 980L660 940L650 1000L600 1010Z M670 990L750 960L720 1000L680 1015Z M230 870L330 850L300 920L240 930Z M50 1050L150 1010L140 1080L60 1100Z",
  strip: "M80 60L150 260L180 450 M190 440L250 700L270 900 M430 560L470 800 M0 1000L100 980 M600 340L800 290L940 250 M700 620L860 560 M60 980L90 1180 M290 600L360 900",
  pink: "M1080 10L1115 10L1118 45L1090 50Z M145 755L185 745L190 790L215 820L165 835Z",
  park: "M1060 980L1130 940L1220 840L1170 960L1165 1100L1150 1262L1120 1262L1140 1120L1105 1110L1080 1180L1070 1262L1040 1250L1090 1120L1080 1060L1040 1020Z M1175 680L1200 630L1290 590L1310 670L1180 710Z M1250 720L1310 690L1370 700L1390 760L1360 790L1390 830L1340 840L1290 790Z M1300 855L1350 850L1338 890Z M1455 120L1492 110L1492 165L1465 160Z M282 190L315 180L318 210L288 222Z M210 200L240 190L260 260L370 250L420 300L370 300L250 270Z M165 350L190 345L200 400L260 430L430 450L440 465L200 425Z M745 360L780 350L800 440L770 460Z M1060 300L1100 285L1105 335L1070 350Z M1020 510L1060 500L1065 565L1025 575Z M425 470L580 440L640 440L680 540L650 620L590 600L530 570L540 540L430 530Z M350 690L392 675L395 715L355 730Z M90 600L125 590L140 720L115 735L90 680Z M18 570L60 560L40 620Z M95 580L120 570L125 600Z M530 715L565 705L568 735L535 742Z M810 680L820 740L795 745Z M400 860L435 850L435 890L400 880Z M675 870L700 850L710 910L690 935L675 900Z M850 920L885 900L892 930L855 945Z M430 1030L530 995L430 1040Z M1215 260L1240 225L1268 225L1230 260L1210 330Z M1280 400L1330 360L1330 400L1300 470L1280 465Z M1465 510L1492 500L1492 580L1475 570Z M440 130L480 180L440 260L500 350L560 380L540 180L600 220L620 130L620 40L590 40L540 180Z",
  sand: "M1320 740L1350 705L1370 740L1360 780L1330 780Z",
  water: "M950 940L1000 905L1010 925L1050 925L1090 908L1097 922L1000 1000L750 1205L715 1200L960 985Z M640 1190L690 1140L695 1160L650 1200Z M690 1262L730 1225L735 1245L715 1262Z M1205 765L1230 760L1228 785L1210 785Z M430 1145L445 1140L470 1190L455 1200Z M570 1070L580 1065L600 1110L585 1110Z M1215 705L1240 720L1268 800L1240 790Z M140 1080L165 1070L165 1095L145 1105Z",
  river: "M650 1065L760 990",
  sea: "M640 1080L790 985",
  stream: "M270 270L340 265L420 300 M480 180L490 230L520 280L520 370 M570 140L590 160L570 210 M1210 340L1215 280L1260 225 M230 200L250 265 M930 1130L940 1200",
  minor: "M0 200L50 430 M340 460L440 870L470 1060 M400 460L530 900 M440 520L560 500L720 450 M500 600L580 940 M220 600L400 550L600 500 M0 670L130 640L300 590L450 560 M270 640L590 560 M0 750L250 680L470 620 M170 540L260 850L330 1100 M230 550L310 850L380 1100 M300 560L420 980L450 1080 M0 830L250 760 M0 900L150 880 M0 1060L230 1000L560 940 M0 1100L300 1040L540 970 M0 1160L200 1120 M50 1000L80 1180 M100 990L140 1180 M360 950L420 1130 M10 940L40 1180 M870 280L940 520L1000 700 M980 240L1070 580 M1110 190L1200 600 M840 90L910 250 M640 60L840 90L1080 0 M820 490L850 480L820 400L800 300 M840 570L950 540L1200 510L1290 515 M1290 510L1320 400L1400 340L1492 290 M690 620L1010 540 M620 165L750 130 M830 670L920 930 M900 850L1050 800 M980 830L1080 870 M1030 690L1090 870L1110 940 M1260 350L1380 180L1492 160 M1040 990L1110 940L1180 870 M280 200L400 160L360 290 M320 150L390 220 M270 0L300 100L380 130 M240 240L300 230L360 290 M0 640L100 610 M0 710L100 690 M150 800L300 760L470 710 M300 980L560 900 M480 720L520 900 M200 640L240 790 M190 900L230 1100 M400 990L430 1090 M640 1040L660 1110L740 1180 M780 980L800 1030 M670 1070L720 1040L730 1090",
  rail: "M0 310L230 160L300 90 M1492 100L1250 240L960 410Q860 480 830 590Q790 720 790 780Q780 870 720 930L600 1020",
  yard: "M-10 1215L180 1150L260 1115",
  apron: "M980 285L1018 390L1000 410L972 400L970 330Z M620 1000L700 940L730 920L700 970Z",
  major: "M600 370L800 300L1060 215L1230 150L1492 50 M0 560L90 520L310 460L380 450 M60 0L130 270L200 460 M740 20L800 290 M655 0L655 60L600 360L680 530L680 580L730 830 M1240 0L1300 230L1380 540 M0 780L30 900L100 1262 M80 520L160 850L220 1150 M700 785L1000 690L1200 610L1492 510 M730 830L780 830L1000 760L1040 740 M850 920L1060 765 M270 270L290 440L360 800 M270 840L380 820L450 770L620 720L700 700 M380 450L420 460L460 420L500 400 M500 910L560 870L620 870L680 820 M0 1000L250 960L500 880 M0 60L0 100L100 70",
  cased: "M540 140L500 180L455 250L460 290L520 400L590 520 M440 405L580 365 M230 80L230 180L270 270 M1060 770L1130 750L1320 675 M800 950L740 1000",
  ramp: "M430 295L460 285L480 310L470 340L490 380L470 400L440 400L460 370L430 320Z M530 180L545 220L480 290L460 290Z M585 370L600 370L605 440L590 430Z M700 840L730 830L725 860Z M555 160L580 170L580 210L555 215Z",
  hwy2: "M590 0L550 180L545 300L560 400L610 500L640 700L670 790L750 920L755 970L720 1000L690 1020L620 1015L480 1070L360 1120L260 1205" },
{ at: [1450, 1380], k: W,
  lake: "M370 310L490 225L560 185L650 160L720 165L800 190L900 240L950 290L1100 345L1170 345L1200 400L1250 420L1350 380L1365 310L1400 265L1470 240L1568 190L1568 1140L31 1140L31 1005L90 1010L150 920L180 850L200 680L240 620L320 590L310 520L350 400Z",
  tan: "M160 440L260 400L340 320L380 300L330 480L290 500L240 520L190 490Z M1200 320L1260 250L1350 240L1320 290L1230 330Z M1240 370L1290 340L1330 350L1300 370Z M1465 300L1500 260L1470 240L1568 185L1530 230L1480 305Z M150 700L220 620L195 680L190 780L150 910L95 1008L130 850Z M500 225L640 165L730 160L800 185L650 165Z",
  shop: "M1175 80L1270 90L1240 150L1180 130Z M1440 415L1470 410L1568 520L1550 530Z",
  pink: "M728 58L755 52L765 100L730 105Z",
  field: "M1435 385L1520 310L1568 285L1568 460L1520 440L1440 415Z",
  park: "M195 200L300 170L350 220L340 270L280 240L220 320L220 240Z M370 290L430 300L400 320Z M300 530L360 490L410 500L430 450L450 515L370 540L350 590L370 600L330 700L280 690L330 640L340 600Z M100 515L145 505L150 540L110 545Z M110 550L160 580L140 590Z M1200 245L1240 232L1245 270L1205 285Z M1165 360L1210 350L1230 380L1300 370L1355 350L1350 390L1280 400L1240 415L1170 400Z M1370 220L1450 200L1465 240L1380 265Z M1130 100L1180 95L1180 130L1140 125Z M760 165L800 180L870 215L850 222L760 185Z M900 235L950 290L1110 345L1080 320L980 270Z M85 0L180 0L220 80L330 120L340 160L280 120L200 80L130 70L90 50Z M31 300L60 310L80 330L31 320Z M330 400L350 390L340 470L325 470Z",
  river: "M140 0L150 60L210 70L220 130L320 160L350 220",
  minor: "M31 205L85 185L120 330 M180 410L260 500 M940 20L980 240 M1070 40L1130 280L1090 295 M300 400L330 420L310 460 M800 125L780 80 M880 185L960 165",
  rail: "M31 660L120 560L230 430",
  yard: "M1020 0L1100 50L1200 80L1400 90L1568 30",
  major: "M31 730L90 970 M210 320L340 280 M280 0L345 80L360 210 M800 125L1060 40L1180 0 M1480 60L1490 140L1568 110 M1400 200L1568 150",
  cased: "M850 190L960 280L1050 290L1120 335L1260 315L1350 280L1390 205 M280 310L350 280L380 230L490 150L600 100L680 95 M300 390L270 500L240 560L200 580L160 700L130 800L130 900L110 950L65 990",
  hwy2: "M31 485L200 430L300 390L340 310L400 240L500 170L640 120L760 130L850 180L960 250L1010 275L1060 270L1260 185L1410 148L1480 140L1568 145",
  strips: "M1470 400L1568 310 M1490 330L1568 420" },
{ at: [2030, 1380], k: E,
  lake: "M-10 290L50 230L70 180L120 165L300 140L420 90L520 20L560 0L1492 0L1492 1140L-10 1140Z",
  tan: "M610 0L960 0L940 80L880 105L840 120L780 220L770 250L715 210L680 140Z",
  shop: "M120 120L330 60L300 140L130 160Z M770 250L775 215L840 120L885 105L850 150L800 190Z",
  strip: "M-10 470L60 540L105 625 M120 690L150 765L165 770L260 762L340 710L400 660 M670 340L730 345",
  field: "M-10 320L60 250L80 290L165 290L172 320L130 360L130 500L80 500L-10 420Z",
  park: "M120 380L150 360L160 450L190 390L210 440L300 560L330 520L430 560L520 520L600 440L625 330L620 260L680 225L735 310L730 345L665 340L640 400L560 510L490 600L400 660L340 710L260 760L165 770L140 740L110 640L80 540L120 520Z M535 440L600 330L620 345L610 390L550 460Z M780 200L860 60L890 90L950 90L910 110L860 120L800 190Z M1055 0L1100 0L1085 50L1050 110L1030 100L1070 50Z M1130 0L1160 0L1150 80L1130 280L1130 400L1145 430L1118 450L1115 510L1140 518L1112 530L1110 600L1112 640L1065 630L1090 610L1095 530L1060 525L1070 600L1040 590L990 580L900 610L850 650L860 690L830 750L815 745L820 660L805 620L825 570L805 530L830 520L860 560L900 530L830 500L870 485L900 500L920 440L885 350L915 370L950 430L1000 430L970 520L1095 515L1112 440L1065 405L1115 420L1115 330L1050 350L1010 420L1000 400L1040 320L990 310L930 350L960 300L1060 270L1100 240L1118 120Z M0 210L30 200L25 240L0 250Z",
  light: "M700 170L740 175L750 220L720 210Z",
  water: "M655 110L800 -5L845 -5L670 125Z M632 40L690 0L695 12L640 50Z M145 700L230 680L235 730L190 715L160 735Z M850 55L858 50L888 105L878 108Z M200 580L230 575L235 600L210 605Z",
  river: "M140 560L150 640L210 675L225 720 M270 600L300 640L330 600L400 580L430 550L500 540L600 470 M290 660L330 610 M440 500L490 530 M520 490L530 520 M160 590L200 590",
  minor: "M0 10L60 0 M20 0L30 100 M120 0L140 60 M200 0L225 60 M680 0L780 110L730 160L725 200L760 250 M725 125L745 140L760 130 M780 110L850 50 M60 30L330 -10",
  yard: "M-10 65L120 35L180 10",
  major: "M-10 175L60 150L140 110L280 90L400 20",
  hwy2: "M-10 145L60 140L200 90L280 55L350 0",
  strips: "M0 380L165 310 M20 300L100 390 M0 340L60 300",
  ferry: "M360 110Q350 230 250 300L155 385 M370 110Q390 240 375 320L315 510 M375 105Q470 240 620 300" }
];

/* Paint order and pen for every map layer; a fill has no width. */
const layers = [
  ["lake", "#90daee"], ["tan", "#f4f0e6"], ["shop", "#f8efdd"], ["strip", "#f8eedb", 8], ["pink", "#fce6e4"], ["field", "#dbe3f7"],
  ["park", "#c3f1d5"], ["light", "#d3f8e2"], ["sand", "#f8e9cf"], ["water", "#90daee"], ["sea", "#90daee", 10], ["river", "#90daee", 6], ["stream", "#90daee", 2],
  ["trail", "#c3f1d5", 2], ["minor", "#dae2ea", 3], ["rail", "#d9dce0", 2], ["rail2", "#d9dce0", 3], ["yard", "#d6d9dd", 5], ["apron", "#d6d9dd"],
  ["runway", "#f1f3fb", 9], ["strips", "#eff3fe", 5], ["major", "#d6dfe7", 7], ["cased", "#9aa8c8", 7], ["cased", "#cfdae6", 5],
  ["ramp", "#aabbd7"], ["hwy", "#6f83b3", 16], ["hwy2", "#6f83b3", 11], ["hwy", "#aabbd7", 14], ["hwy2", "#aabbd7", 9], ["ferry", "#4dbfe0", 2]
];
const plot = (s, d) => d.replace(/(-?\d+) (-?\d+)/g, (_, x, y) =>
  Math.round(s.at[0] + x * s.k) + " " + Math.round(s.at[1] + y * V));
const ground = layers.map(([name, ink, pen]) => {
  const shapes = sheets.filter(s => s[name]).map(s => plot(s, s[name]));
  if (pen) return `<path d="${shapes.join(" ")}" fill="none" stroke="${ink}" stroke-width="${pen}" stroke-linejoin="round"${name === "ferry" ? ' stroke-dasharray="14 6"' : ""}/>`;
  /* one path per polygon, so that neighbours that overlap never cut holes in each other */
  return `<g fill="${ink}">${shapes.flatMap(d => d.split(/ (?=M)/)).map(d => `<path d="${d}"/>`).join("")}</g>`;
}).join("");

/* Place names: class, anchor, x, baseline, text */
const names = [
  ["area","middle",1925,232,"NEWTONBROOK"],["area","middle",1911,360,"WILLOWDALE"],
  ["area","middle",2128,294,"BAYVIEW"],["area","middle",2128,312,"VILLAGE"],
  ["area","middle",1577,380,"YORK"],["area","middle",1577,398,"UNIVERSITY"],["area","middle",1577,416,"HEIGHTS"],
  ["area","middle",1696,419,"BATHURST"],["area","middle",1696,437,"MANOR"],
  ["town","middle",1964,440,"NORTH YORK"],["area","end",2122,537,"YORK MILLS"],
  ["park","middle",1671,288,"G Ross"],["park","middle",1671,316,"Lord Park"],
  ["fun","end",1543,306,"Village at"],["fun","end",1522,333,"Creek"],
  ["park","middle",1839,513,"Earl Bales Park"],["park","middle",1536,576,"Downsview"],["park","middle",1536,603,"Park"],
  ["area","middle",1531,668,"DOWNSVIEW"],["area","middle",1667,768,"YORKDALE"],
  ["park","middle",1995,803,"Eglinton Park"],["park","middle",1848,992,"Cedarvale Park"],
  ["area","middle",1638,998,"EGLINTON WEST"],["area","middle",1963,1059,"CASA LOMA"],["area","middle",1618,1212,"THE JUNCTION"],
  ["shop","end",1584,1133,"Experience"],["fun","middle",1884,1172,"Royal Ontario Museum"],["shop","start",1849,1268,"Dufferin Mall"],
  ["area","middle",1947,1295,"LITTLE ITALY"],["area","middle",1906,1342,"TRINITY-BELLWOODS"],["area","end",1549,1320,"OLD MILL"],
  ["park","middle",1656,1374,"High Park"],["area","middle",1780,1387,"PARKDALE"],["area","middle",1905,1439,"LIBERTY VILLAGE"],
  ["grey","middle",1568,1509,"Bay Arch Bridge"],["park","middle",1564,1633,"Humber Bay"],["park","middle",1564,1661,"Park West"],
  ["fun","end",2150,1539,"Centreville"],["fun","end",2151,1568,"Amusement Park"],
  ["park slant","middle",2465,1438,"Tommy"],["park slant","middle",2465,1466,"Thompson"],["park slant","middle",2465,1494,"Park"],
  ["area","middle",2150,1413,"HARBOURFRONT"],["city","middle",2124,1323,"Toronto"],["area","middle",2421,1235,"LESLIEVILLE"],
  ["park","start",2447,1149,"Balmy Beach Park"],["area","start",2472,1110,"UPPER BEACHES"],["area","middle",2521,1055,"EAST DANFORTH"],
  ["park","start",2598,1219,"Woodbine"],["park","end",2201,1023,"Evergreen"],["park","end",2202,1051,"Brick Works"],
  ["town","middle",2368,1008,"EAST YORK"],["park","start",2587,953,"Taylor"],["park","start",2557,982,"Creek Park"],
  ["grey","start",2166,937,"Mount Pleasant"],["grey","start",2166,965,"Cemetery, Cremation..."],["shop","end",2298,853,"Costco Wholesale"],
  ["area","middle",2427,777,"FLEMINGDON"],["area","middle",2427,795,"PARK"],["area","start",2591,804,"CLAIRLEA"],
  ["area","middle",2503,657,"VICTORIA"],["area","middle",2503,675,"VILLAGE"],["area","start",2588,560,"WEXFORD"],["area","start",2588,578,"MARYVALE"],
  ["area","middle",2372,573,"DON MILLS"],["park","middle",2271,627,"Toronto"],["park","middle",2270,655,"Botanical Garden"],
  ["shop","start",2379,284,"CF Fairview Mall"],["shop","end",2592,432,"Costco Wholesale"]
].map(([c, a, x, y, t]) => `<text class="${c}" text-anchor="${a}" x="${x}" y="${y}">${t}</text>`).join("");

const roadNames = [
  ["M1870 616L1972 506", "ON 401 Express"], ["M2448 387L2530 385L2600 364", "ON 401 Express"],
  ["M1738 708L1756 775L1776 850L1788 885", "William R. Allen Rd"], ["M2413 586L2416 660L2422 750", "Don Valley Pkwy"],
  ["M2243 1126Q2272 1176 2279 1216L2284 1280", "Don Valley Pkwy"], ["M1655 1438Q1705 1410 1782 1450", "Gardiner Expy"]
].map(([d, t], i) => `<path id="road${i}" d="${d}" fill="none"/><text class="road"><textPath href="#road${i}">${t}</textPath></text>`).join("");

const shields = [[2358,319,"404"],[2397,368,"401"],[1812,617,"401"],[1512,739,"401"],[1490,139,"407"],[1800,145,"95"]]
  .map(([x, y, n]) => `<path transform="translate(${x} ${y})" d="M5 1H37Q41 1 41 5V22Q41 25 38 26L24 31Q21 32 18 31L4 26Q1 25 1 22V5Q1 1 5 1Z" fill="#fff" stroke="#6b6b6b" stroke-width="2"/><text class="shield" x="${x + 21}" y="${y + 23}" text-anchor="middle">${n}</text>`).join("");

const glyphs = {
  bag: '<path d="M-7 -3H7L9 10H-9Z" fill="#fff"/><path d="M-4 -3V-6Q-4 -11 0 -11Q4 -11 4 -6V-3" fill="none" stroke="#fff" stroke-width="2"/><path d="M-3 2Q0 6 3 2" fill="none" stroke="#0a96ff" stroke-width="2"/>',
  tree: '<path d="M0 -14L6 -7H4L8 0H6L10 6H2V10H-2V6H-10L-6 0H-8L-4 -7H-6Z" fill="#fff"/>',
  cart: '<path d="M-10 -11H-6L-5 -8H10L7 1H-4L-5 4H8V6H-8L-6 1L-8 -9H-10Z" fill="#fff"/><circle cx="-4" cy="10" r="2" fill="#fff"/><circle cx="6" cy="10" r="2" fill="#fff"/>',
  bridge: '<path d="M-7 -10V8M7 -10V8M-10 3H10M-7 -4H7M-9 7H-4M4 7H9M-3 -8V3M3 -8V3M-9 7H-5" fill="none" stroke="#fff" stroke-width="2"/>',
  grave: '<path d="M-2 -11L3 -2H1L4 4H-1V7H-3V4H-8L-5 -2H-7Z" fill="#fff"/><path d="M-10 8H10M7 8V0M5 2H9" fill="none" stroke="#fff" stroke-width="2"/>',
  wheel: '<circle r="8" cy="-2" fill="none" stroke="#fff" stroke-width="2"/><circle r="4" cy="-2" fill="#fff"/><path d="M-1 0H1L3 10H-3Z M-7 11H7V9H-7Z" fill="#fff"/><g fill="#b266ff" stroke="#fff" stroke-width="2"><circle cx="-5" cy="-10" r="2"/><circle cx="5" cy="-10" r="2"/><circle cx="-10" cy="-2" r="2"/><circle cx="10" cy="-2" r="2"/><circle cx="-6" cy="6" r="2"/><circle cx="6" cy="6" r="2"/></g>',
  museum: '<path d="M-12 9H12M-10 5H10M-7 -4V5M0 -4V5M7 -4V5M-9 -5H9L0 -11Z" fill="none" stroke="#fff" stroke-width="2"/>'
};
const pins = [
  [2349,270,"#0a96ff","bag"],[2328,839,"#0a96ff","bag"],[2623,419,"#0a96ff","bag"],[1819,1254,"#0a96ff","bag"],[1615,1120,"#0a96ff","cart"],
  [2232,1024,"#1aa874","tree"],[1996,838,"#1aa874","tree"],[1564,1571,"#1aa874","tree"],[1451,1711,"#1aa874","tree"],[2568,1206,"#1aa874","tree"],
  [2136,937,"#78909c","grave"],[1612,1447,"#78909c","bridge"],[2181,1540,"#b266ff","wheel"],[2057,1158,"#b266ff","museum"]
].map(([x, y, c, g]) => `<g transform="translate(${x} ${y})"><path class="drop" d="M0 -24C14 -24 24 -14 24 0C24 13 14 19 5 28Q0 33 -5 28C-14 19 -24 13 -24 0C-24 -14 -14 -24 0 -24Z" fill="#fff"/><circle r="20" fill="${c}"/>${glyphs[g]}</g>`).join("");

const flags = [[1955,497,7],[1899,657,6],[2033,1111,5]]
  .map(([x, y, n]) => `<path transform="translate(${x} ${y})" d="M1 1H59V49H37L30 62L23 49H1Z" fill="#fff" stroke="#000" stroke-width="2"/><text class="flag" text-anchor="middle" x="${x + 30}" y="${y + 36}">${n}</text>`).join("");

/* ---------- map ---------- */
component("map-credits", () => `
  <style>
    :host { display: flex; gap: 2px; font: 400 20px/26px Roboto, sans-serif; color: #000; }
    button, span, a { padding: 2px 11px 0; border: 0; background: #d8ebf3; color: inherit; font: inherit; text-decoration: none; white-space: nowrap; }
    a { font-weight: 500; }
  </style>
  <button type="button">Keyboard shortcuts</button><span>Map data ©2025 Google</span><a href="#terms">Terms</a><a href="#report">Report a map error</a>`);

component("branch-map", () => `
  <style>
    :host { display: block; position: relative; overflow: hidden; background: #f7f7f7; font-family: Roboto, sans-serif; }
    .plane { display: block; width: 100%; height: 100%; }
    text { paint-order: stroke; stroke: rgba(255,255,255,.85); stroke-width: 6px; stroke-linejoin: round; font: 400 28px Roboto, sans-serif; }
    .area { font-size: 18px; font-weight: 500; letter-spacing: 2px; fill: #35373c; }
    .town { font-size: 22px; font-weight: 500; letter-spacing: 3px; fill: #43464b; }
    .city { font-size: 53px; font-weight: 500; fill: #2f3136; }
    .park { fill: #17865a; }
    .slant { font-style: italic; }
    .shop { fill: #1a73e8; }
    .fun { fill: #8143d6; }
    .grey { fill: #5a7281; }
    .road { font-size: 20px; fill: #2b3b5e; }
    .shield { font-size: 20px; fill: #222; stroke: none; }
    .flag { fill: #000; stroke: none; }
    .count { font-size: 20px; font-weight: 500; fill: #fff; stroke: none; }
    .logo { font-size: 36px; font-weight: 500; stroke: #c9ecf6; }
    .drop { filter: drop-shadow(0 2px 2px rgba(0,0,0,.35)); }
    button { position: absolute; right: 20px; width: 80px; height: 80px; padding: 0; border: 0; background: #fff;
             box-shadow: 0 2px 8px rgba(0,0,0,.3); display: flex; align-items: center; justify-content: center; }
    .full { top: 20px; border-radius: 4px; }
    .move { bottom: 48px; border-radius: 50%; }
    map-credits { position: absolute; right: 0; bottom: 0; }
  </style>
  <svg class="plane" viewBox="1462 159 1158 1600" preserveAspectRatio="xMidYMid slice" role="img" aria-label="Map of branches in Toronto">
    ${ground}${roadNames}${shields}${names}${pins}${flags}
    <circle cx="2129" cy="1345" r="46" fill="#00f" opacity=".2"/><circle cx="2129" cy="1345" r="37" fill="#00f" opacity=".3"/><circle cx="2129" cy="1345" r="29" fill="#00f" opacity=".65"/>
    <text class="count" text-anchor="middle" x="2129" y="1351">4</text>
    <text class="logo" x="1482" y="1739"><tspan fill="#4285f4">G</tspan><tspan fill="#ea4335">o</tspan><tspan fill="#fbbc04">o</tspan><tspan fill="#4285f4">g</tspan><tspan fill="#34a853">l</tspan><tspan fill="#ea4335">e</tspan></text>
  </svg>
  <button class="full" type="button" aria-label="Toggle fullscreen view"><svg width="36" height="36" viewBox="0 0 36 36" fill="none" stroke="#666" stroke-width="5"><path d="M3 12V3H12M24 3H33V12M33 24V33H24M12 33H3V24"/></svg></button>
  <button class="move" type="button" aria-label="Map camera controls"><svg width="46" height="46" viewBox="0 0 46 46" fill="none" stroke="#666" stroke-width="5"><path d="M16 9L23 3L30 9M16 37L23 43L30 37M9 16L3 23L9 30M37 16L43 23L37 30"/></svg></button>
  <map-credits></map-credits>`);
</script>
</body>
</html>
